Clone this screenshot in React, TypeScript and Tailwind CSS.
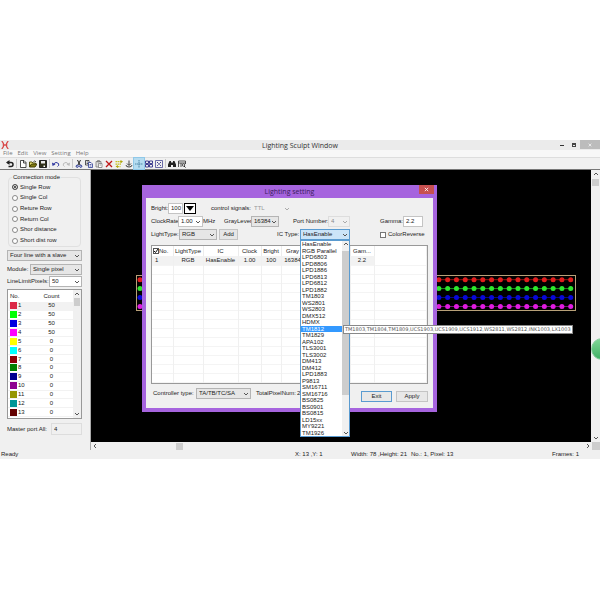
import type { ReactNode } from "react";
import clsx from "clsx";

const connectionModes = ["Single Row", "Single Col", "Reture Row", "Return Col", "Shor distance", "Short dist row"];

const ports = [
  { color: "#dc2846", count: 50 },
  { color: "#00ff00", count: 50 },
  { color: "#0000e0", count: 50 },
  { color: "#ff00ff", count: 50 },
  { color: "#ffff00", count: 0 },
  { color: "#00ffff", count: 0 },
  { color: "#8b0008", count: 0 },
  { color: "#008000", count: 0 },
  { color: "#000090", count: 0 },
  { color: "#8f008f", count: 0 },
  { color: "#969600", count: 0 },
  { color: "#009696", count: 0 },
  { color: "#640000", count: 0 },
  { color: "#500064", count: 0 },
];

const icTypes = [
  "HasEnable", "RGB Parallel", "LPD6803", "LPD8806", "LPD1886", "LPD6813", "LPD6812", "LPD1882",
  "TM1803", "WS2801", "WS2803", "DMX512", "HDMX", "TM1812", "TM1829", "APA102", "TLS3001", "TLS3002",
  "DM413", "DM412", "LPD1883", "P9813", "SM16711", "SM16716", "BS0825", "BS0901", "BS0815", "LD15xx",
  "MY9221", "TM1926",
];

const columns = [
  { title: "No.", value: "1", width: "w-[21px]" },
  { title: "LightType", value: "RGB", width: "w-[30px]" },
  { title: "IC", value: "HasEnable", width: "w-[35px]" },
  { title: "Clock", value: "1.00", width: "w-[23px]" },
  { title: "Bright", value: "100", width: "w-[20px]" },
  { title: "Gray", value: "16384", width: "w-[23px]" },
  { title: "", value: "", width: "w-[46px]" },
  { title: "Gam...", value: "2.2", width: "w-[24px]" },
  { title: "", value: "", width: "" },
];

const strands = ["#e01c1c", "#2ee62e", "#0808d8", "#e01ce0"];

function Chevron({ dir = "down", className }: { dir?: "up" | "down" | "left" | "right"; className?: string }) {
  const paths = {
    down: "M1 2l2 2 2-2",
    up: "M1 4l2-2 2 2",
    left: "M4 1L2 3l2 2",
    right: "M2 1l2 2-2 2",
  };
  return (
    <svg viewBox="0 0 6 6" className={clsx("size-[6px] shrink-0", className)} fill="none" stroke="currentColor">
      <path d={paths[dir]} />
    </svg>
  );
}

interface ComboProps {
  id: string;
  value: string;
  className?: string;
  tone?: string;
  disabled?: boolean;
}

function Combo({ id, value, className, tone = "border-[#b4b4b4] bg-[#e6e6e6]", disabled }: ComboProps) {
  return (
    <div className={clsx("relative", className)}>
      <select
        id={id}
        aria-label={id}
        disabled={disabled}
        className={clsx("block h-[11px] w-full appearance-none border pl-[2px] leading-[9px]", tone)}
      >
        <option>{value}</option>
      </select>
      <Chevron
        className={clsx("pointer-events-none absolute right-[2px] top-[3px]", disabled ? "text-[#aaa]" : "text-[#555]")}
      />
    </div>
  );
}

function Tool({ label, active, children }: { label: string; active?: boolean; children: ReactNode }) {
  return (
    <button
      type="button"
      aria-label={label}
      className={clsx(
        "flex h-[11px] w-[10px] items-center justify-center",
        active && "bg-[#b5dcf0] outline outline-[#90c8e8]",
      )}
    >
      <svg viewBox="0 0 16 16" className="size-[8px]" fill="none" stroke="#222" strokeWidth="2">
        {children}
      </svg>
    </button>
  );
}

function Separator() {
  return <span className="mx-px h-[9px] w-px bg-[#c8c8c8]" />;
}

function Toolbar() {
  return (
    <div className="flex h-[12px] items-center border-b border-[#777] bg-[#f0f0f0] pl-[5px]">
      <Tool label="Back">
        <path d="M2 5h8q4 0 4 4t-4 4H5" strokeWidth="3" />
        <path d="M7 0L0 5l7 5z" fill="#222" stroke="none" />
      </Tool>
      <Separator />
      <Tool label="New">
        <path d="M3 1h7l4 4v10H3zM9 1v5h5" fill="#fff" strokeWidth="1.6" />
      </Tool>
      <Tool label="Open">
        <path d="M1 14V4h5l2 2h5v3" fill="#e8e070" stroke="#555010" />
        <path d="M1 14l4-6h11l-4 6z" fill="#807a10" stroke="#444008" />
        <path d="M9 3q3-3 5 1" strokeWidth="1.5" />
      </Tool>
      <Tool label="Save">
        <path d="M1 1h14v14H1z" fill="#303018" />
        <path d="M4 2h8v5H4z" fill="#e8e8e8" stroke="none" />
        <path d="M9 11h3v3H9z" fill="#fff" stroke="none" />
      </Tool>
      <Separator />
      <Tool label="Undo">
        <path d="M3 8q5-6 10-1 2 4-2 6" stroke="#3038a0" />
        <path d="M0 5l1 7 6-3z" fill="#3038a0" stroke="none" />
      </Tool>
      <Tool label="Redo">
        <path d="M13 8Q8 2 3 7q-2 4 2 6" stroke="#bbb" />
        <path d="M16 5l-1 7-6-3z" fill="#bbb" stroke="none" />
      </Tool>
      <Separator />
      <Tool label="Cut">
        <path d="M5 0l5 10M11 0L6 10" />
        <circle cx="4.500" cy="12.500" r="2.200" stroke="#203090" />
        <circle cx="11.500" cy="12.500" r="2.200" stroke="#203090" />
      </Tool>
      <Tool label="Copy">
        <path d="M1 1h7v9H1zM3 4h3M3 7h3" fill="#fff" strokeWidth="1.5" />
        <path d="M7 5h5l3 3v7H7zM9 9h4M9 12h4" fill="#fff" stroke="#203090" strokeWidth="1.5" />
      </Tool>
      <Tool label="Paste">
        <path d="M2 3h10v11H2zM5 1h4v3H5z" fill="#ddd" stroke="#777" strokeWidth="1.5" />
        <path d="M7 7h7v8H7zM9 10h3" fill="#fff" stroke="#777" strokeWidth="1.5" />
      </Tool>
      <Tool label="Delete">
        <path d="M2 2l12 12M14 2L2 14" stroke="#c01818" strokeWidth="2.600" />
      </Tool>
      <Tool label="Route">
        <path d="M1 3h13M1 8h11M5 13h6" stroke="#c8c020" strokeWidth="2.500" strokeDasharray="3 1" />
        <path d="M11 0l5 3-5 4zM6 10l-5 3 5 3z" fill="#b0a810" stroke="none" />
      </Tool>
      <Tool label="Download">
        <path d="M8 1v9M4 7l4 4 4-4M2 10q0 4 6 4t6-4" strokeWidth="1.700" />
      </Tool>
      <Tool label="Grid lines" active>
        <path d="M8 0v16M0 8h16" stroke="#5088a8" strokeDasharray="3 1" />
      </Tool>
      <Tool label="Grid">
        <path d="M1 2h6v5H1zM9 2h6v5H9zM1 9h6v5H1zM9 9h6v5H9z" stroke="#404090" />
      </Tool>
      <Tool label="Fit">
        <path d="M1 1h14v14H1z" stroke="#404090" strokeWidth="1.500" />
        <path d="M4 4l8 8M12 4l-8 8" stroke="#404090" strokeDasharray="3 1" />
      </Tool>
      <Separator />
      <Tool label="Find">
        <path d="M3 2h3v3h4V2h3l3 7v5h-6v-4H6v4H0V9z" fill="#222" stroke="none" />
      </Tool>
      <Tool label="Inspect">
        <path d="M1 14V2h14v6M1 6h14M6 6v8" strokeWidth="1.500" />
        <circle cx="11" cy="10" r="2.500" strokeWidth="1.500" />
        <path d="M12 12l3 3" />
      </Tool>
    </div>
  );
}

function SidePanel() {
  return (
    <aside className="flex w-[91px] shrink-0 flex-col border-r border-[#aaa] bg-[#f0f0f0] pb-[15px] pl-[7px] pr-[8px] pt-[3px]">
      <fieldset className="mx-px rounded-sm border border-[#e0e0e0] px-[3px]">
        <legend className="px-px leading-[9px]">Connection mode</legend>
        <div className="grid h-[64px] grid-rows-6">
          {connectionModes.map((mode, i) => (
            <label key={mode} className="flex items-center gap-[2px] leading-[9px]">
              <input
                type="radio"
                name="mode"
                defaultChecked={i === 0}
                className="size-[6px] appearance-none rounded-full border border-[#888] bg-white checked:border-[#555] checked:bg-[#222] checked:shadow-[inset_0_0_0_1px_white]"
              />
              {mode}
            </label>
          ))}
        </div>
      </fieldset>

      <Combo id="Slave layout" value="Four line with a slave" className="mt-[3px]" />
      <div className="mt-[3px] flex items-center">
        <label htmlFor="Module" className="w-[23px]">Module:</label>
        <Combo id="Module" value="Single pixel" className="flex-1" />
      </div>
      <div className="mt-px flex items-center">
        <label htmlFor="LineLimitPixels" className="w-[42px]">LineLimitPixels:</label>
        <Combo id="LineLimitPixels" value="50" className="flex-1" tone="border-[#b4b4b4] bg-white" />
      </div>

      <div className="mt-[2px] flex h-[130px] overflow-hidden border border-[#999] bg-white">
        <table className="h-[136px] flex-1 table-fixed border-collapse">
          <thead>
            <tr className="h-[12px]">
              <th className="w-[22px] pl-[2px] text-left font-normal">No.</th>
              <th className="font-normal">Count</th>
            </tr>
          </thead>
          <tbody>
            {ports.map(({ color, count }, i) => (
              <tr key={color} className={clsx("border-b border-[#f2f2f2]", i === 0 && "bg-[#f2f2f2]")}>
                <td className="p-0 pl-[2px]">
                  <span className="flex items-center gap-px leading-[7px]">
                    <span className="size-[7px]" style={{ background: color }} />
                    {i + 1}
                  </span>
                </td>
                <td className="p-0 text-center leading-[7px]">{count}</td>
              </tr>
            ))}
          </tbody>
        </table>
        <div className="flex w-[8px] flex-col items-center justify-between bg-[#f0f0f0] py-px text-[#555]">
          <div className="flex flex-col items-center gap-px">
            <Chevron dir="up" />
            <span className="h-[8px] w-[6px] bg-[#cdcdcd]" />
          </div>
          <Chevron />
        </div>
      </div>

      <div className="mt-[4px] flex items-center">
        <label htmlFor="master" className="w-[44px] whitespace-nowrap">Master port All:</label>
        <input
          id="master"
          readOnly
          value="4"
          className="h-[12px] w-0 flex-1 border border-[#ddd] bg-[#f0f0f0] pl-[2px]"
        />
      </div>
    </aside>
  );
}

function LedStrip() {
  return (
    <svg className="absolute left-[45px] top-[105px] h-[37px] w-[441px]" viewBox="0 0 441 37" fill="none">
      <rect x="0.5" y="0.5" width="439" height="35" stroke="#b8a078" />
      {strands.map((color, row) => (
        <g key={color} stroke={color} fill={color}>
          <path d={`M4 ${4.7 + row * 8.9}H435`} strokeWidth="0.8" opacity="0.8" />
          {Array.from({ length: 50 }, (_, i) => (
            <circle key={i} cx={4 + i * 8.79} cy={4.7 + row * 8.9} r="2.5" stroke="none" />
          ))}
        </g>
      ))}
    </svg>
  );
}

function IcTypeList() {
  return (
    <div className="absolute left-0 top-[11px] z-10 flex h-[197px] w-full border border-[#5a9bd0] bg-white">
      <ul role="listbox" aria-label="IC Type options" className="grid flex-1 auto-rows-fr whitespace-nowrap">
        {icTypes.map((type) => (
          <li
            key={type}
            role="option"
            aria-selected={type === "TM1812"}
            className={clsx("flex min-h-0 items-center pl-px leading-[6px]", type === "TM1812" && "bg-[#3399ff] text-white")}
          >
            {type}
          </li>
        ))}
      </ul>
      <div className="flex w-[7px] flex-col items-center justify-between bg-[#f0f0f0] text-[#555]">
        <div className="flex w-full flex-col items-center gap-[4px]">
          <Chevron dir="up" />
          <span className="h-[144px] w-full bg-[#cdcdcd]" />
        </div>
        <Chevron />
      </div>
      <div
        role="tooltip"
        className="absolute left-[42px] top-[84px] whitespace-nowrap border border-[#888] bg-white px-px font-['DejaVu_Sans',sans-serif] text-[5px] leading-[7px] text-[#555]"
      >
        TM1803,TM1804,TM1809,UCS1903,UCS1909,UCS1912,WS2811,WS2812,INK1003,LX1003
      </div>
    </div>
  );
}

function LightingDialog() {
  const field = "h-[11px] border border-[#c4c4c4] bg-white pb-px pl-[2px] leading-[8px]";
  return (
    <section
      aria-label="Lighting setting"
      className="absolute left-[51px] top-[15px] flex w-[295px] flex-col bg-[#a664de] px-[4px] pb-[4px]"
    >
      <header className="relative flex h-[13px] items-center justify-center font-['Open_Sans',sans-serif] text-[7px] text-[#3a1c5c]">
        Lighting setting
        <button
          type="button"
          aria-label="Close"
          className="absolute -right-px top-0 flex h-[9px] w-[15px] items-center justify-center bg-[#c75050] text-white"
        >
          <svg viewBox="0 0 6 6" className="size-[5px]" stroke="currentColor">
            <path d="M1 1l4 4M5 1L1 5" />
          </svg>
        </button>
      </header>

      <div className="bg-[#f0f0f0] px-[5px] pb-[6px] pt-[5px]">
        <div className="flex h-[11px] items-center">
          <label htmlFor="bright" className="w-[17px]">Bright:</label>
          <input id="bright" defaultValue="100" className={clsx("w-[15px]", field)} />
          <button
            type="button"
            aria-label="Pick brightness"
            className="ml-px flex h-[11px] w-[12px] items-center justify-center border border-black bg-white"
          >
            <svg viewBox="0 0 8 5" className="h-[5px] w-[8px]">
              <path d="M0 0h8L4 5z" />
            </svg>
          </button>
          <label htmlFor="control signals" className="ml-[15px] w-[40px] whitespace-nowrap">control signals:</label>
          <Combo id="control signals" value="TTL" disabled className="w-[41px]" tone="border-transparent text-[#999]" />
        </div>

        <div className="mt-[2px] flex h-[11px] items-center">
          <label htmlFor="ClockRate" className="w-[27px]">ClockRate:</label>
          <Combo id="ClockRate" value="1.00" className="w-[25px]" tone="border-[#c4c4c4] bg-white" />
          <span className="w-[21px]">MHz</span>
          <label htmlFor="GrayLever" className="w-[27px]">GrayLever:</label>
          <Combo id="GrayLever" value="16384" className="w-[28px]" />
          <label htmlFor="Port Number" className="ml-[14px] w-[35px] whitespace-nowrap">Port Number:</label>
          <Combo id="Port Number" value="4" disabled className="w-[22px]" tone="border-[#ddd] text-[#888]" />
          <label htmlFor="gamma" className="ml-auto w-[23px]">Gamma:</label>
          <input id="gamma" defaultValue="2.2" className={clsx("mr-[5px] w-[20px]", field)} />
        </div>

        <div className="mt-[2px] flex h-[11px] items-center">
          <label htmlFor="LightType" className="w-[28px]">LightType:</label>
          <Combo id="LightType" value="RGB" className="w-[38px]" />
          <button type="button" className="ml-[2px] h-[11px] w-[19px] border border-[#c4c4c4] bg-[#e6e6e6] leading-[9px]">
            Add
          </button>
          <label htmlFor="IC Type" className="ml-[39px] w-[23px] whitespace-nowrap">IC Type:</label>
          <div className="relative w-[50px]">
            <Combo id="IC Type" value="HasEnable" tone="border-[#5a9bd0] bg-[#cbe4f8]" />
            <IcTypeList />
          </div>
          <label className="ml-[30px] flex items-center gap-[2px]">
            <input type="checkbox" className="size-[6px] appearance-none border border-[#777] bg-white" />
            ColorReverse
          </label>
        </div>

        <div className="mt-[5px] h-[139px] overflow-hidden border border-[#999] bg-white">
          <table className="w-full table-fixed border-collapse text-center">
            <thead>
              <tr className="h-[10px]">
                {columns.map(({ title, width }, i) => (
                  <th
                    key={i}
                    className={clsx("whitespace-nowrap border-r border-[#ececec] p-0 font-normal leading-[8px]", width)}
                  >
                    {i === 0 ? (
                      <label className="flex items-center pl-px">
                        <input
                          type="checkbox"
                          defaultChecked
                          className="size-[6px] appearance-none border border-[#555] bg-white"
                        />
                        <svg viewBox="0 0 6 6" className="-ml-[6px] size-[6px]" fill="none" stroke="#111">
                          <path d="M1 3l1.500 1.500L5 1" />
                        </svg>
                        {title}
                      </label>
                    ) : (
                      title
                    )}
                  </th>
                ))}
              </tr>
            </thead>
            <tbody>
              {Array.from({ length: 15 }, (_, row) => (
                <tr key={row} className="h-[9px] border-b border-[#f4f4f4]">
                  {columns.map(({ value }, i) => (
                    <td
                      key={i}
                      className={clsx(
                        "border-r border-[#f0f0f0] p-0 leading-[8px]",
                        i === 0 && "pl-[3px] text-left",
                        row === 0 && i < 8 && "bg-[#f2f2f2]",
                      )}
                    >
                      {row === 0 && value}
                    </td>
                  ))}
                </tr>
              ))}
            </tbody>
          </table>
        </div>

        <div className="mt-[4px] flex h-[14px] items-end justify-between pl-[2px]">
          <div className="flex items-center self-start">
            <label htmlFor="Controller type" className="w-[43px] whitespace-nowrap">Controller type:</label>
            <Combo id="Controller type" value="TA/TB/TC/SA" className="w-[55px]" />
            <span className="ml-[5px] w-[41px] whitespace-nowrap">TotalPixelNum:</span>
            <span>2</span>
          </div>
          <div className="flex gap-[4px]">
            <button type="button" className="h-[11px] w-[31px] border border-[#5a9bd0] bg-[#e8e8e8] leading-[9px]">
              Exit
            </button>
            <button type="button" className="h-[11px] w-[32px] border border-[#c4c4c4] bg-[#e8e8e8] leading-[9px]">
              Apply
            </button>
          </div>
        </div>
      </div>
    </section>
  );
}

export default function App() {
  return (
    <div className="min-h-screen overflow-hidden bg-white pt-[140px] font-['Liberation_Sans',sans-serif] text-[6px] leading-[9px] text-[#222]">
      <div className="relative">
        <header className="relative flex h-[10px] items-center justify-center bg-[#ebebeb] font-['Open_Sans',sans-serif] text-[7px] text-[#333]">
          <svg viewBox="0 0 10 10" className="absolute left-px top-px size-[8px]" fill="none" stroke="#d84848" strokeWidth="1.6">
            <path d="M1 0l2 3v4l-2 3M9 0L7 3v4l2 3M3 5h4" />
          </svg>
          Lighting Sculpt Window
          <div className="absolute right-0 top-0 flex items-center">
            <button type="button" aria-label="Minimize" className="flex h-[9px] w-[12px] items-center justify-center">
              <span className="mt-[2px] h-px w-[4px] bg-[#333]" />
            </button>
            <button type="button" aria-label="Restore" className="flex h-[9px] w-[12px] items-center justify-center">
              <span className="h-[4px] w-[4px] border border-t-2 border-[#444]" />
            </button>
            <button type="button" aria-label="Close window" className="flex h-[9px] w-[20px] items-center justify-center bg-[#bcbcbc] text-white">
              <svg viewBox="0 0 6 6" className="size-[4px]" stroke="currentColor">
                <path d="M1 1l4 4M5 1L1 5" />
              </svg>
            </button>
          </div>
        </header>

        <nav className="flex h-[8px] items-center gap-[5px] border-b border-[#ddd] bg-[#f7f7f7] pl-[3px] font-['Open_Sans',sans-serif] leading-[7px] text-[#777]">
          {["File", "Edit", "View", "Setting", "Help"].map((item) => (
            <a key={item} href="#">{item}</a>
          ))}
        </nav>

        <Toolbar />

        <main className="flex">
          <SidePanel />
          <div className="flex min-w-0 flex-1 flex-col">
            <div className="relative flex-1 bg-black">
              <LedStrip />
              <LightingDialog />
            </div>
            <div className="flex h-[8px] items-center justify-between bg-[#f0f0f0] text-[#555]">
              <div className="flex items-center gap-[78px] pl-px">
                <Chevron dir="left" />
                <span className="h-[7px] w-[7px] bg-[#cdcdcd]" />
              </div>
              <Chevron dir="right" />
            </div>
          </div>
          <div className="flex w-[9px] flex-col items-center justify-between bg-[#f0f0f0] text-[#555]">
            <div className="flex flex-col items-center gap-[2px] pt-px">
              <Chevron dir="up" />
              <span className="h-[7px] w-[7px] bg-[#cdcdcd]" />
            </div>
            <div className="flex flex-col items-center gap-px">
              <Chevron />
              <span className="size-[8px] bg-[#cdcdcd]" />
            </div>
          </div>
        </main>

        <footer className="flex h-[9px] items-center bg-[#f0f0f0] px-px">
          <span className="w-[294px]">Ready</span>
          <span className="w-[56px]">X: 13 ,Y: 1</span>
          <span className="w-[60px]">Width: 78 ,Height: 21</span>
          <span>No.: 1, Pixel: 13</span>
          <span className="ml-auto pr-[20px]">Frames: 1</span>
        </footer>

        <div className="absolute -right-[13px] top-[198px] size-[22px] rounded-full border border-[#8ad0a0] bg-linear-to-b from-[#7fd897] to-[#3fb065]" />
      </div>
    </div>
  );
}
